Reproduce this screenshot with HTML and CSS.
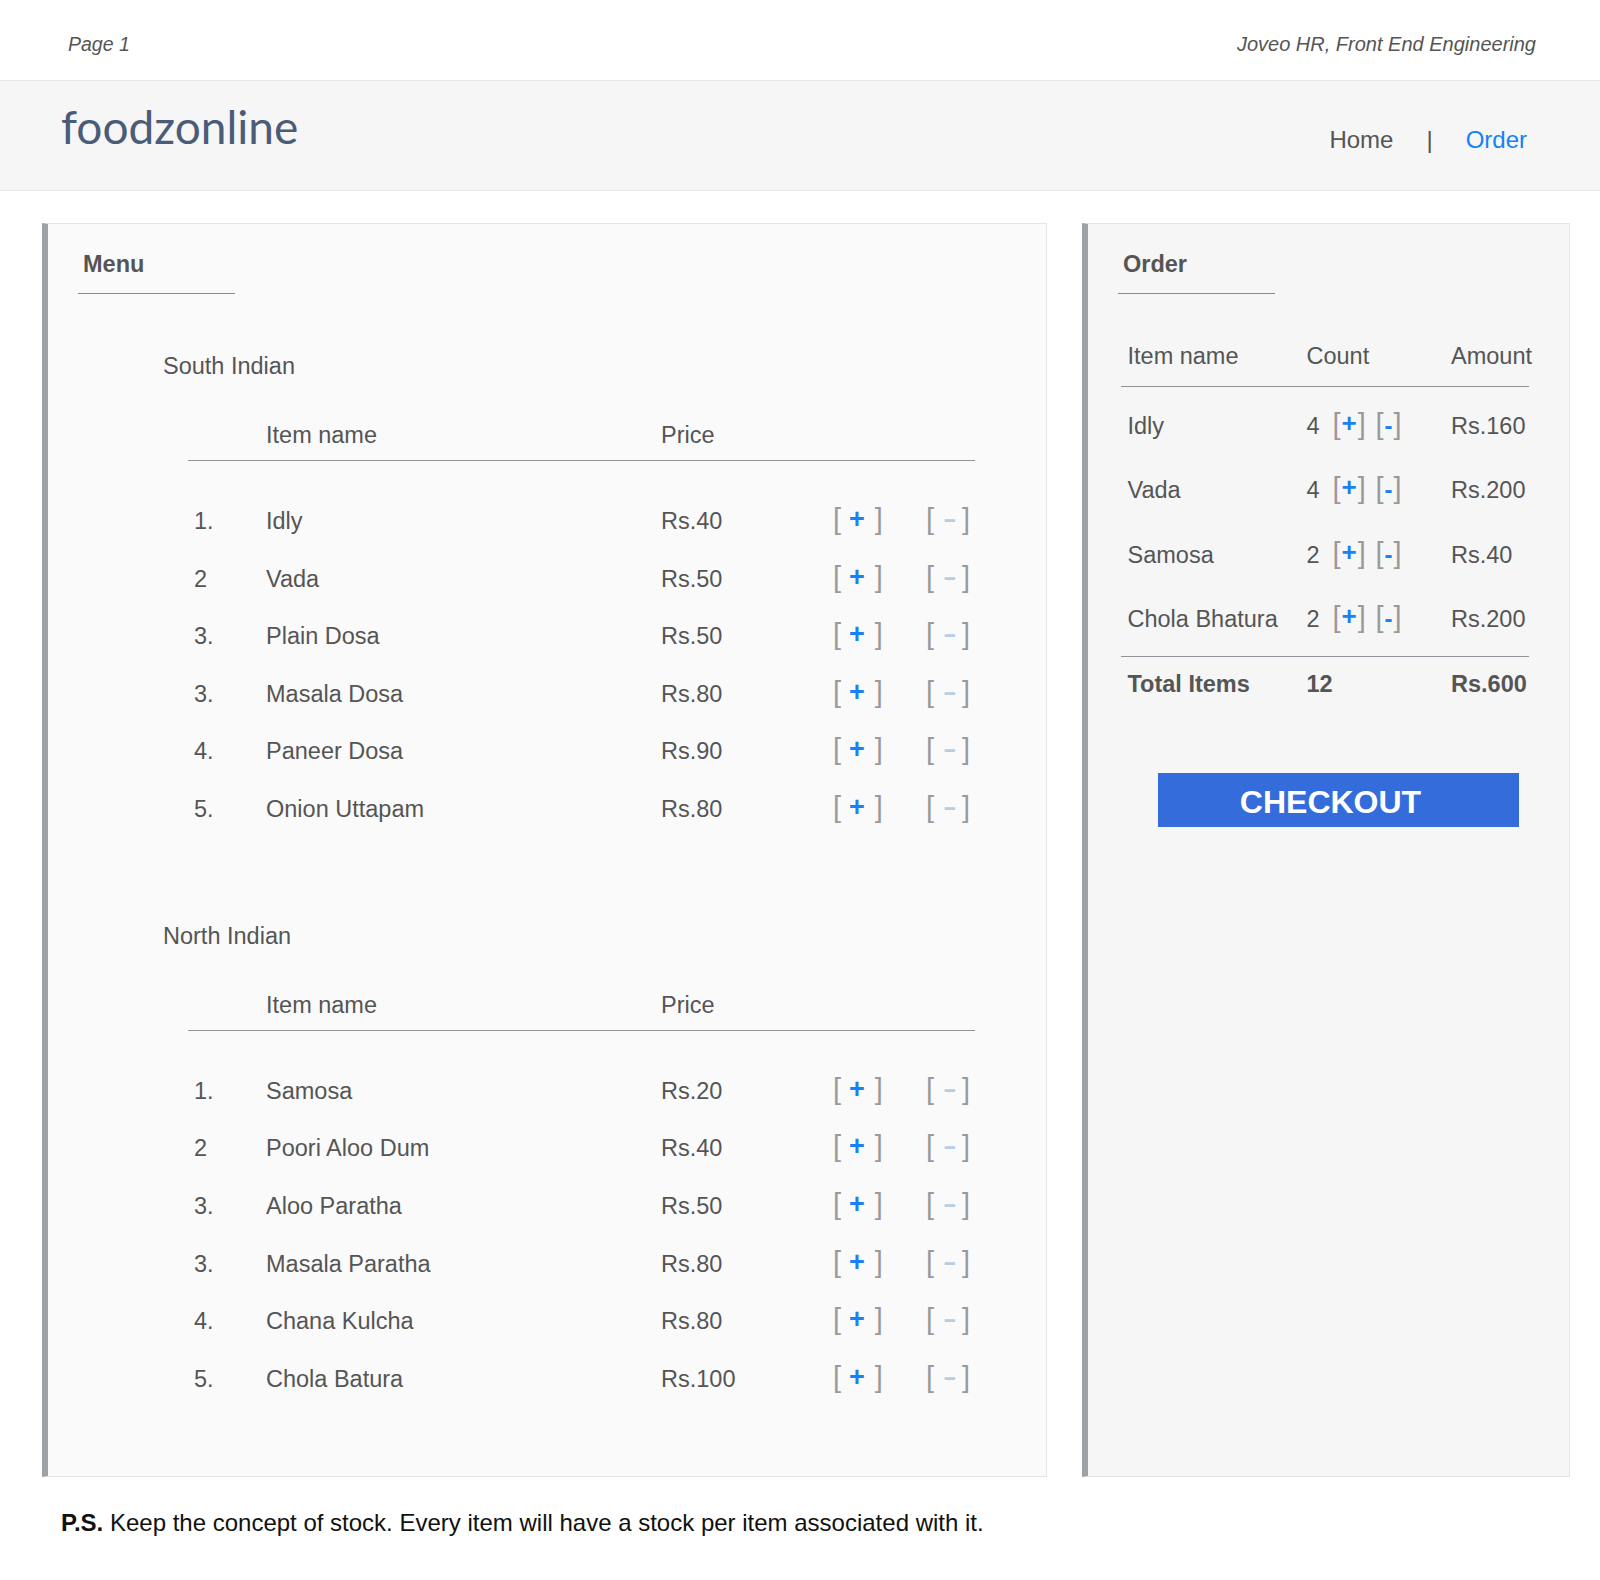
FILE: index.html
```html
<!DOCTYPE html>
<html lang="en">
<head>
<meta charset="utf-8">
<title>foodzonline</title>
<link rel="stylesheet" href="styles.css">
</head>
<body>
<div class="topbar">
  <span class="page-no">Page 1</span>
  <span class="company">Joveo HR, Front End Engineering</span>
</div>
<header class="header">
  <div class="logo">foodzonline</div>
  <nav class="nav">
    <a class="nav-link">Home</a>
    <span class="nav-sep">|</span>
    <a class="nav-link active">Order</a>
  </nav>
</header>
<main class="main">
  <section class="panel menu">
    <h2 class="panel-title">Menu</h2>

    <div class="category">
      <h3 class="cat-title">South Indian</h3>
      <div class="menu-table">
        <div class="mrow mhead"><span></span><span>Item name</span><span>Price</span></div>
        <div class="mbody">
          <div class="mrow"><span>1.</span><span>Idly</span><span>Rs.40</span><span class="mb"><span class="br">[</span><span class="mp">+</span><span class="br">]</span></span><span class="mb"><span class="br">[</span><span class="mm">-</span><span class="br">]</span></span></div>
          <div class="mrow"><span>2</span><span>Vada</span><span>Rs.50</span><span class="mb"><span class="br">[</span><span class="mp">+</span><span class="br">]</span></span><span class="mb"><span class="br">[</span><span class="mm">-</span><span class="br">]</span></span></div>
          <div class="mrow"><span>3.</span><span>Plain Dosa</span><span>Rs.50</span><span class="mb"><span class="br">[</span><span class="mp">+</span><span class="br">]</span></span><span class="mb"><span class="br">[</span><span class="mm">-</span><span class="br">]</span></span></div>
          <div class="mrow"><span>3.</span><span>Masala Dosa</span><span>Rs.80</span><span class="mb"><span class="br">[</span><span class="mp">+</span><span class="br">]</span></span><span class="mb"><span class="br">[</span><span class="mm">-</span><span class="br">]</span></span></div>
          <div class="mrow"><span>4.</span><span>Paneer Dosa</span><span>Rs.90</span><span class="mb"><span class="br">[</span><span class="mp">+</span><span class="br">]</span></span><span class="mb"><span class="br">[</span><span class="mm">-</span><span class="br">]</span></span></div>
          <div class="mrow"><span>5.</span><span>Onion Uttapam</span><span>Rs.80</span><span class="mb"><span class="br">[</span><span class="mp">+</span><span class="br">]</span></span><span class="mb"><span class="br">[</span><span class="mm">-</span><span class="br">]</span></span></div>
        </div>
      </div>
    </div>

    <div class="category category-next">
      <h3 class="cat-title">North Indian</h3>
      <div class="menu-table">
        <div class="mrow mhead"><span></span><span>Item name</span><span>Price</span></div>
        <div class="mbody">
          <div class="mrow"><span>1.</span><span>Samosa</span><span>Rs.20</span><span class="mb"><span class="br">[</span><span class="mp">+</span><span class="br">]</span></span><span class="mb"><span class="br">[</span><span class="mm">-</span><span class="br">]</span></span></div>
          <div class="mrow"><span>2</span><span>Poori Aloo Dum</span><span>Rs.40</span><span class="mb"><span class="br">[</span><span class="mp">+</span><span class="br">]</span></span><span class="mb"><span class="br">[</span><span class="mm">-</span><span class="br">]</span></span></div>
          <div class="mrow"><span>3.</span><span>Aloo Paratha</span><span>Rs.50</span><span class="mb"><span class="br">[</span><span class="mp">+</span><span class="br">]</span></span><span class="mb"><span class="br">[</span><span class="mm">-</span><span class="br">]</span></span></div>
          <div class="mrow"><span>3.</span><span>Masala Paratha</span><span>Rs.80</span><span class="mb"><span class="br">[</span><span class="mp">+</span><span class="br">]</span></span><span class="mb"><span class="br">[</span><span class="mm">-</span><span class="br">]</span></span></div>
          <div class="mrow"><span>4.</span><span>Chana Kulcha</span><span>Rs.80</span><span class="mb"><span class="br">[</span><span class="mp">+</span><span class="br">]</span></span><span class="mb"><span class="br">[</span><span class="mm">-</span><span class="br">]</span></span></div>
          <div class="mrow"><span>5.</span><span>Chola Batura</span><span>Rs.100</span><span class="mb"><span class="br">[</span><span class="mp">+</span><span class="br">]</span></span><span class="mb"><span class="br">[</span><span class="mm">-</span><span class="br">]</span></span></div>
        </div>
      </div>
    </div>
  </section>

  <section class="panel order">
    <h2 class="panel-title">Order</h2>
    <div class="order-table">
      <div class="orow ohead"><span>Item name</span><span>Count</span><span>Amount</span></div>
      <div class="obody">
        <div class="orow"><span>Idly</span><span class="cnt"><span class="num">4</span><span class="ob"><span class="br">[</span><span class="op">+</span><span class="br">]</span></span><span class="ob ob-minus"><span class="br">[</span><span class="om">-</span><span class="br">]</span></span></span><span>Rs.160</span></div>
        <div class="orow"><span>Vada</span><span class="cnt"><span class="num">4</span><span class="ob"><span class="br">[</span><span class="op">+</span><span class="br">]</span></span><span class="ob ob-minus"><span class="br">[</span><span class="om">-</span><span class="br">]</span></span></span><span>Rs.200</span></div>
        <div class="orow"><span>Samosa</span><span class="cnt"><span class="num">2</span><span class="ob"><span class="br">[</span><span class="op">+</span><span class="br">]</span></span><span class="ob ob-minus"><span class="br">[</span><span class="om">-</span><span class="br">]</span></span></span><span>Rs.40</span></div>
        <div class="orow"><span>Chola Bhatura</span><span class="cnt"><span class="num">2</span><span class="ob"><span class="br">[</span><span class="op">+</span><span class="br">]</span></span><span class="ob ob-minus"><span class="br">[</span><span class="om">-</span><span class="br">]</span></span></span><span>Rs.200</span></div>
      </div>
      <div class="orow ototal"><span>Total Items</span><span>12</span><span>Rs.600</span></div>
    </div>
    <button class="checkout">CHECKOUT</button>
  </section>
</main>
<p class="note"><b>P.S.</b> Keep the concept of stock. Every item will have a stock per item associated with it.</p>
</body>
</html>
```
FILE: styles.css
```css
* { box-sizing: border-box; }

body {
  margin: 0;
  width: 1600px;
  background: #ffffff;
  color: #555555;
  font-family: "Liberation Sans", Arial, sans-serif;
}

/* top strip */
.topbar {
  height: 80px;
  padding: 32px 64px 0 68px;
  display: flex;
  justify-content: space-between;
  font-style: italic;
  font-size: 20px;
  line-height: 24px;
  color: #555555;
}
.page-no { font-size: 19.5px; }

/* header */
.header {
  height: 111px;
  border-top: 1px solid #e8e8e8;
  border-bottom: 1px solid #e8e8e8;
  background: #f6f6f6;
  display: flex;
  justify-content: space-between;
  align-items: flex-start;
  padding: 0 73px 0 61px;
}
.logo {
  font-family: Lato, "Open Sans", sans-serif;
  font-size: 46px;
  line-height: 50px;
  color: #4a5c78;
  padding-top: 21px;
}
.nav {
  display: flex;
  gap: 33px;
  font-size: 24px;
  line-height: 30px;
  padding-top: 44px;
  color: #555555;
}
.nav-link.active { color: #1482f5; }

/* main */
.main {
  display: flex;
  gap: 35px;
  padding: 32px 30px 0 42px;
}
.panel {
  border: 1px solid #e6e6e6;
  border-left: 6px solid #9da2a7;
  padding: 25px 0 67.5px 30px;
}
.menu { width: 1005px; background: #fafafa; }
.order { width: 488px; background: #f6f6f6; }

.panel-title {
  margin: 0;
  width: 157px;
  padding: 0 5px 14px;
  border-bottom: 1px solid #8a8a8a;
  font-size: 23.5px;
  line-height: 30px;
  font-weight: bold;
  color: #555555;
}

/* menu */
.cat-title {
  margin: 57px 0 0 85px;
  font-size: 23.5px;
  font-weight: normal;
  line-height: 30px;
  color: #555555;
}
.category-next .cat-title { margin-top: 82.2px; }

.menu-table {
  margin: 39px 0 0 110px;
  width: 787px;
}
.mrow {
  display: grid;
  grid-template-columns: 72px 395px 174px 93px auto;
  align-items: baseline;
  padding-left: 6px;
  font-size: 23.5px;
}
.mhead {
  line-height: 30px;
  padding-bottom: 10px;
  border-bottom: 1px solid #8f959b;
}
.mbody { padding-top: 32px; }
.mbody .mrow {
  height: 57.6px;
  line-height: 57.6px;
}
.mb {
  display: flex;
  align-items: baseline;
  line-height: 1;
}
.br {
  font-size: 29px;
  color: #9a9a9a;
}
.mb .br:first-child { margin-left: -2px; }
.mp {
  font-size: 27px;
  font-weight: bold;
  color: #1a80f5;
  margin: 0 10px 0 8px;
  transform: translateY(-1px);
}
.mm {
  display: inline-block;
  font-size: 24px;
  font-weight: bold;
  color: #b6cde6;
  margin: 0 11px 0 9px;
  transform: translateY(-2px) scaleX(1.7);
  transform-origin: 0 50%;
}

/* order */
.order-table {
  margin: 47px 0 0 3px;
  width: 408px;
}
.orow {
  display: grid;
  grid-template-columns: 179px 144.5px auto;
  align-items: baseline;
  padding-left: 6.5px;
  font-size: 23.5px;
}
.ohead {
  line-height: 30px;
  padding-bottom: 15px;
  border-bottom: 1px solid #8f959b;
}
.obody {
  padding: 7px 0 4.7px;
  border-bottom: 1px solid #8f959b;
}
.obody .orow {
  height: 64.4px;
  line-height: 64.4px;
}
.cnt {
  display: flex;
  align-items: baseline;
}
.num { width: 26px; }
.ob {
  display: flex;
  align-items: baseline;
  line-height: 1;
}
.ob-minus { margin-left: 9.6px; }
.op {
  font-size: 26px;
  font-weight: bold;
  color: #1a80f5;
  margin: 0 1px 0 1px;
  transform: translateY(-2px);
}
.om {
  font-size: 24px;
  font-weight: bold;
  color: #1a80f5;
  margin: 0 1px 0 1px;
}
.ototal {
  margin-top: 2px;
  line-height: 50px;
  font-weight: bold;
}

.checkout {
  display: block;
  margin: 64px 0 0 40px;
  width: 361px;
  height: 54px;
  padding: 4px 16px 0 0;
  border: 0;
  background: #356cdb;
  color: #ffffff;
  font-family: "Liberation Sans", Arial, sans-serif;
  font-size: 32px;
  font-weight: bold;
  line-height: 50px;
  text-align: center;
}

/* note */
.note {
  margin: 0;
  padding: 31px 0 0 61px;
  font-size: 24px;
  line-height: 30px;
  color: #111111;
}
.note b { font-weight: bold; }
```
